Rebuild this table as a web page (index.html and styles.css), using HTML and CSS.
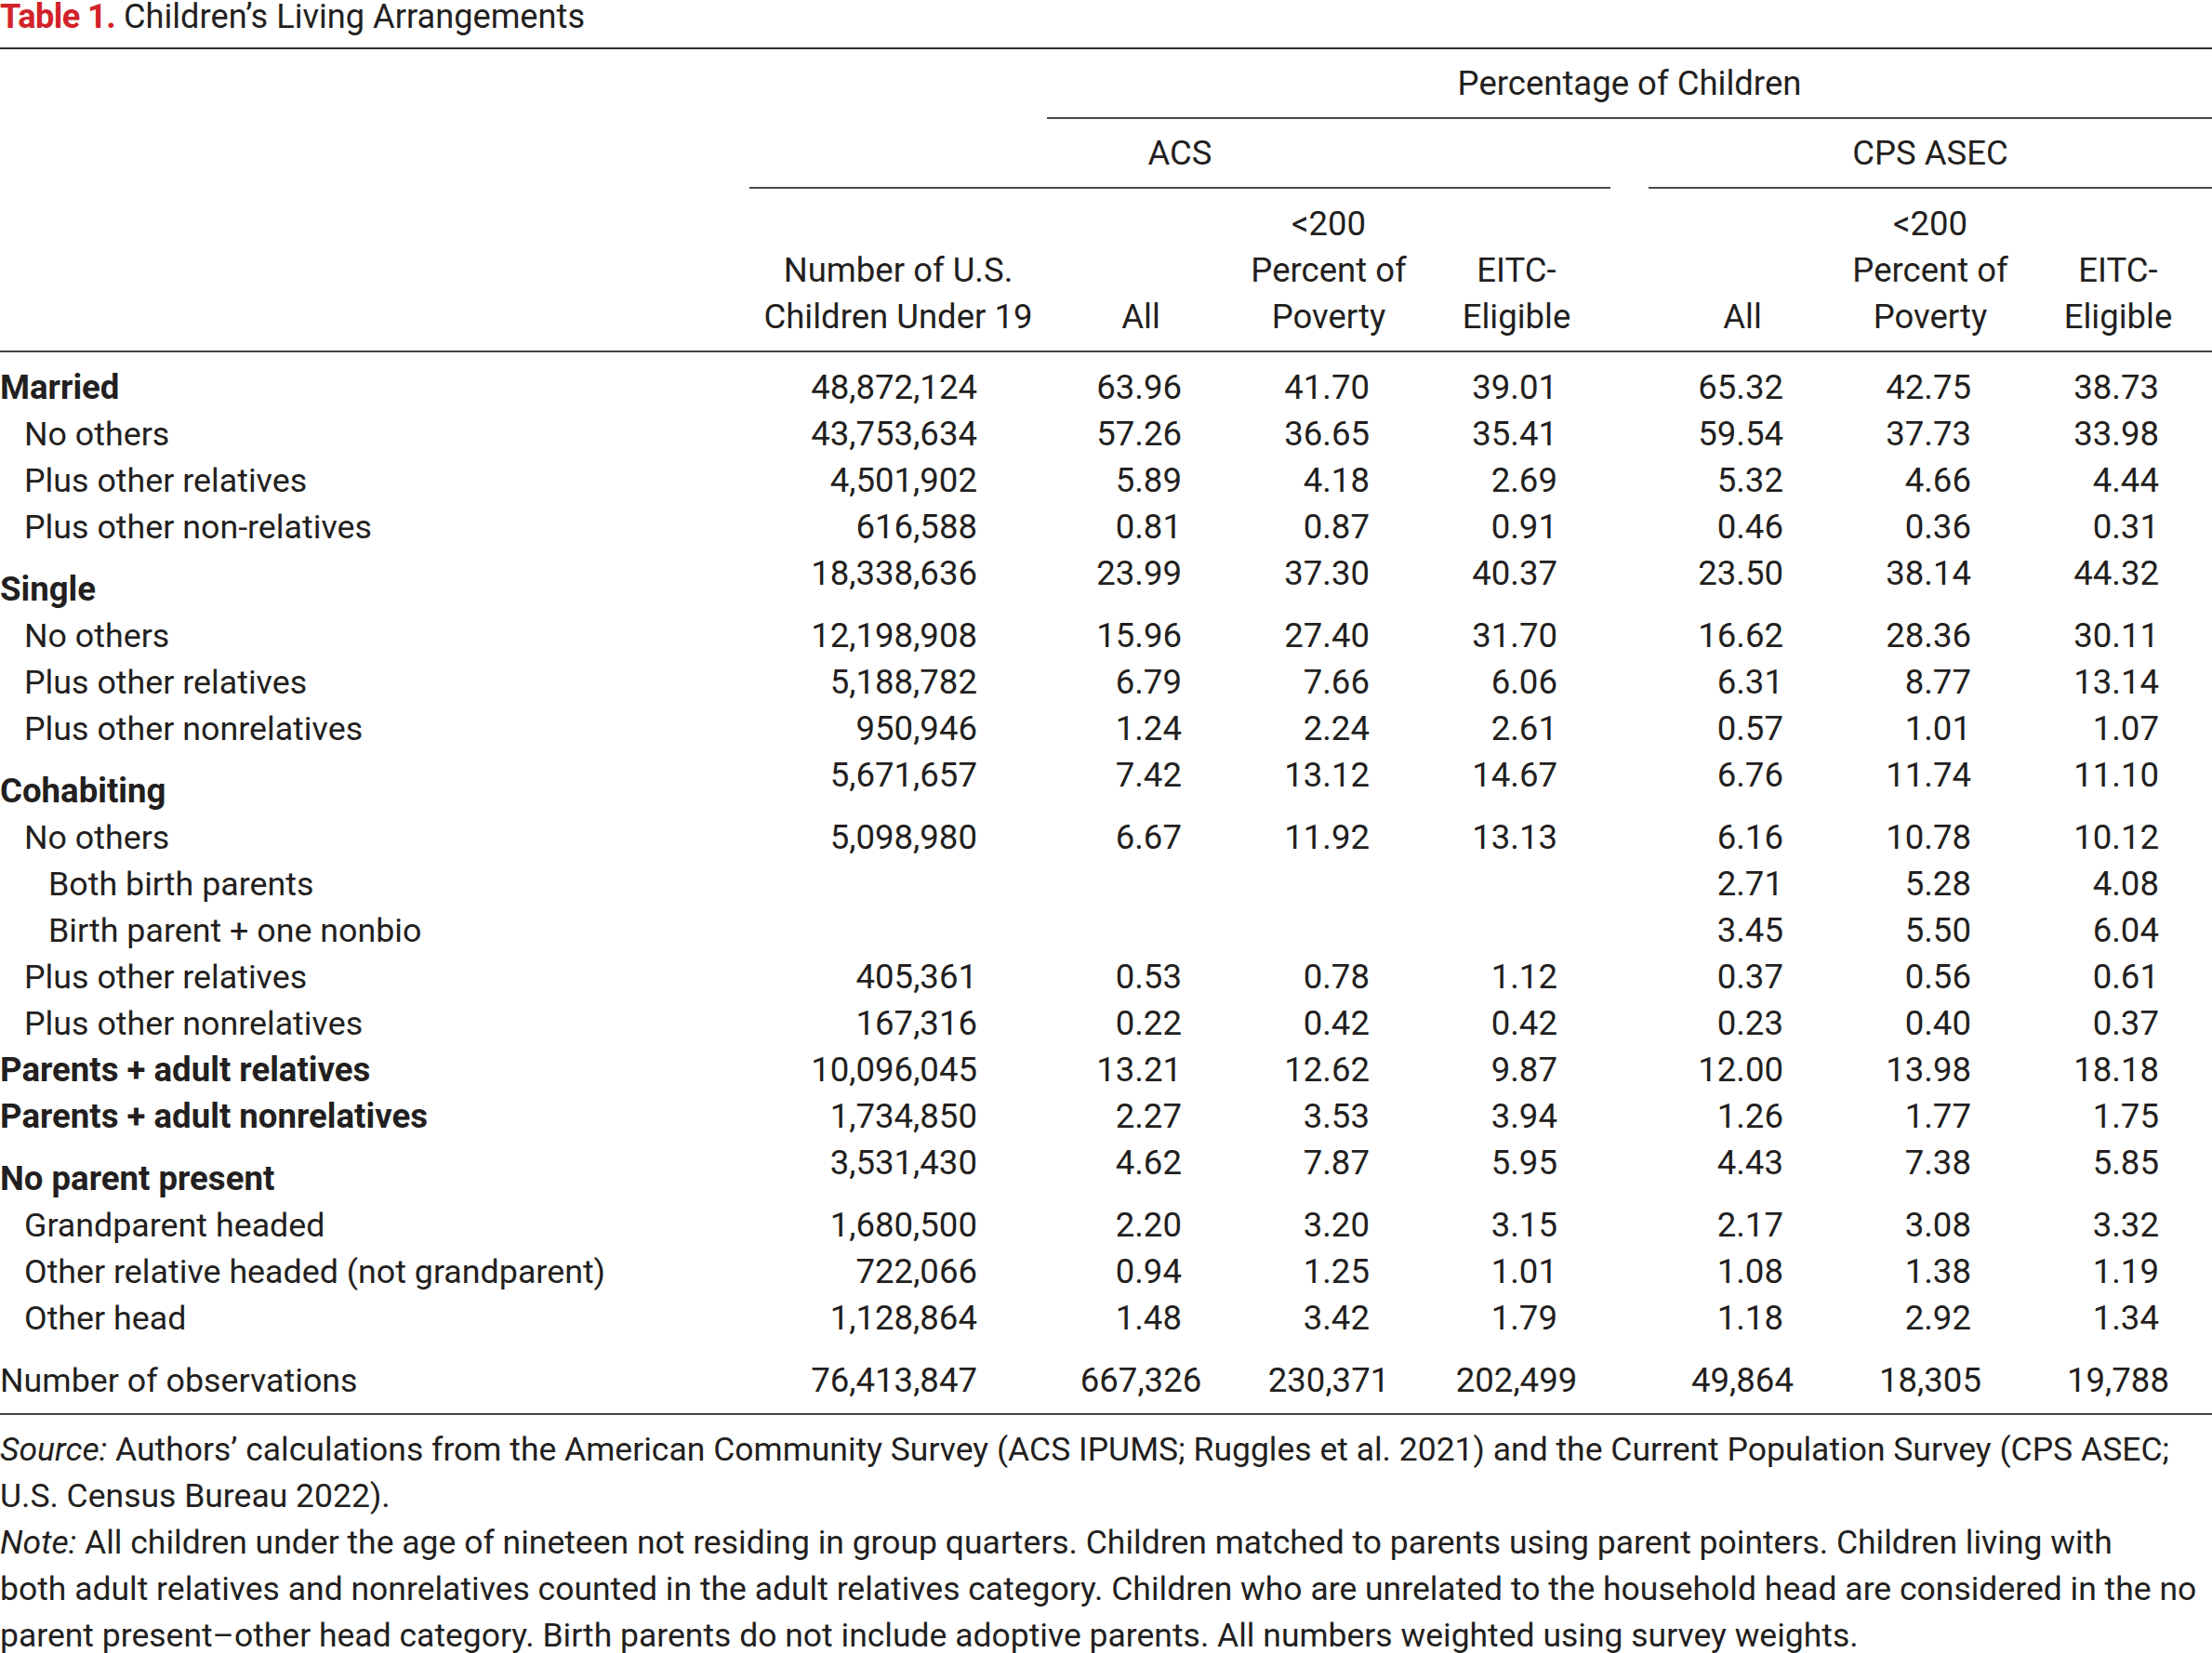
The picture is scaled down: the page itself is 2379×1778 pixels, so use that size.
FILE: index.html
```html
<!DOCTYPE html>
<html lang="en">
<head>
<meta charset="utf-8">
<title>Table 1. Children’s Living Arrangements</title>
<link rel="stylesheet" href="styles.css">
</head>
<body>
<div class="page">
  <h1 class="title"><span class="tlabel">Table 1.</span> Children’s Living Arrangements</h1>
  <table class="tbl">
    <colgroup>
      <col class="c-label"><col class="c-count"><col class="c-pct"><col class="c-pct"><col class="c-pct"><col class="c-gap"><col class="c-pct"><col class="c-pct"><col class="c-pct">
    </colgroup>
    <thead>
      <tr class="hrow">
        <th colspan="2"></th>
        <th colspan="7" class="ruled">Percentage of Children</th>
      </tr>
      <tr class="hrow">
        <th></th>
        <th colspan="4" class="ruled">ACS</th>
        <th></th>
        <th colspan="3" class="ruled">CPS ASEC</th>
      </tr>
      <tr class="hcols">
        <th></th>
        <th>Number of U.S.<br>Children Under 19</th>
        <th>All</th>
        <th>&lt;200<br>Percent of<br>Poverty</th>
        <th>EITC-<br>Eligible</th>
        <th></th>
        <th>All</th>
        <th>&lt;200<br>Percent of<br>Poverty</th>
        <th>EITC-<br>Eligible</th>
      </tr>
    </thead>
    <tbody>
      <tr class="first">
        <td class="lab b">Married</td><td class="cnt">48,872,124</td><td class="pct">63.96</td><td class="pct">41.70</td><td class="pct">39.01</td><td></td><td class="pct">65.32</td><td class="pct">42.75</td><td class="pct">38.73</td>
      </tr>
      <tr>
        <td class="lab i1">No others</td><td class="cnt">43,753,634</td><td class="pct">57.26</td><td class="pct">36.65</td><td class="pct">35.41</td><td></td><td class="pct">59.54</td><td class="pct">37.73</td><td class="pct">33.98</td>
      </tr>
      <tr>
        <td class="lab i1">Plus other relatives</td><td class="cnt">4,501,902</td><td class="pct">5.89</td><td class="pct">4.18</td><td class="pct">2.69</td><td></td><td class="pct">5.32</td><td class="pct">4.66</td><td class="pct">4.44</td>
      </tr>
      <tr>
        <td class="lab i1">Plus other non-relatives</td><td class="cnt">616,588</td><td class="pct">0.81</td><td class="pct">0.87</td><td class="pct">0.91</td><td></td><td class="pct">0.46</td><td class="pct">0.36</td><td class="pct">0.31</td>
      </tr>
      <tr class="sec">
        <td class="lab b">Single</td><td class="cnt">18,338,636</td><td class="pct">23.99</td><td class="pct">37.30</td><td class="pct">40.37</td><td></td><td class="pct">23.50</td><td class="pct">38.14</td><td class="pct">44.32</td>
      </tr>
      <tr>
        <td class="lab i1">No others</td><td class="cnt">12,198,908</td><td class="pct">15.96</td><td class="pct">27.40</td><td class="pct">31.70</td><td></td><td class="pct">16.62</td><td class="pct">28.36</td><td class="pct">30.11</td>
      </tr>
      <tr>
        <td class="lab i1">Plus other relatives</td><td class="cnt">5,188,782</td><td class="pct">6.79</td><td class="pct">7.66</td><td class="pct">6.06</td><td></td><td class="pct">6.31</td><td class="pct">8.77</td><td class="pct">13.14</td>
      </tr>
      <tr>
        <td class="lab i1">Plus other nonrelatives</td><td class="cnt">950,946</td><td class="pct">1.24</td><td class="pct">2.24</td><td class="pct">2.61</td><td></td><td class="pct">0.57</td><td class="pct">1.01</td><td class="pct">1.07</td>
      </tr>
      <tr class="sec">
        <td class="lab b">Cohabiting</td><td class="cnt">5,671,657</td><td class="pct">7.42</td><td class="pct">13.12</td><td class="pct">14.67</td><td></td><td class="pct">6.76</td><td class="pct">11.74</td><td class="pct">11.10</td>
      </tr>
      <tr>
        <td class="lab i1">No others</td><td class="cnt">5,098,980</td><td class="pct">6.67</td><td class="pct">11.92</td><td class="pct">13.13</td><td></td><td class="pct">6.16</td><td class="pct">10.78</td><td class="pct">10.12</td>
      </tr>
      <tr>
        <td class="lab i2">Both birth parents</td><td class="cnt"></td><td class="pct"></td><td class="pct"></td><td class="pct"></td><td></td><td class="pct">2.71</td><td class="pct">5.28</td><td class="pct">4.08</td>
      </tr>
      <tr>
        <td class="lab i2">Birth parent + one nonbio</td><td class="cnt"></td><td class="pct"></td><td class="pct"></td><td class="pct"></td><td></td><td class="pct">3.45</td><td class="pct">5.50</td><td class="pct">6.04</td>
      </tr>
      <tr>
        <td class="lab i1">Plus other relatives</td><td class="cnt">405,361</td><td class="pct">0.53</td><td class="pct">0.78</td><td class="pct">1.12</td><td></td><td class="pct">0.37</td><td class="pct">0.56</td><td class="pct">0.61</td>
      </tr>
      <tr>
        <td class="lab i1">Plus other nonrelatives</td><td class="cnt">167,316</td><td class="pct">0.22</td><td class="pct">0.42</td><td class="pct">0.42</td><td></td><td class="pct">0.23</td><td class="pct">0.40</td><td class="pct">0.37</td>
      </tr>
      <tr>
        <td class="lab b">Parents + adult relatives</td><td class="cnt">10,096,045</td><td class="pct">13.21</td><td class="pct">12.62</td><td class="pct">9.87</td><td></td><td class="pct">12.00</td><td class="pct">13.98</td><td class="pct">18.18</td>
      </tr>
      <tr>
        <td class="lab b">Parents + adult nonrelatives</td><td class="cnt">1,734,850</td><td class="pct">2.27</td><td class="pct">3.53</td><td class="pct">3.94</td><td></td><td class="pct">1.26</td><td class="pct">1.77</td><td class="pct">1.75</td>
      </tr>
      <tr class="sec">
        <td class="lab b">No parent present</td><td class="cnt">3,531,430</td><td class="pct">4.62</td><td class="pct">7.87</td><td class="pct">5.95</td><td></td><td class="pct">4.43</td><td class="pct">7.38</td><td class="pct">5.85</td>
      </tr>
      <tr>
        <td class="lab i1">Grandparent headed</td><td class="cnt">1,680,500</td><td class="pct">2.20</td><td class="pct">3.20</td><td class="pct">3.15</td><td></td><td class="pct">2.17</td><td class="pct">3.08</td><td class="pct">3.32</td>
      </tr>
      <tr>
        <td class="lab i1">Other relative headed (not grandparent)</td><td class="cnt">722,066</td><td class="pct">0.94</td><td class="pct">1.25</td><td class="pct">1.01</td><td></td><td class="pct">1.08</td><td class="pct">1.38</td><td class="pct">1.19</td>
      </tr>
      <tr>
        <td class="lab i1">Other head</td><td class="cnt">1,128,864</td><td class="pct">1.48</td><td class="pct">3.42</td><td class="pct">1.79</td><td></td><td class="pct">1.18</td><td class="pct">2.92</td><td class="pct">1.34</td>
      </tr>
      <tr class="obs">
        <td class="lab">Number of observations</td><td class="cnt">76,413,847</td><td class="ctr">667,326</td><td class="ctr">230,371</td><td class="ctr">202,499</td><td></td><td class="ctr">49,864</td><td class="ctr">18,305</td><td class="ctr">19,788</td>
      </tr>
    </tbody>
  </table>
  <div class="notes">
    <p class="note"><em>Source:</em> Authors’ calculations from the American Community Survey (ACS IPUMS; Ruggles et al. 2021) and the Current Population Survey (CPS ASEC;<br>U.S. Census Bureau 2022).</p>
    <p class="note"><em>Note:</em> All children under the age of nineteen not residing in group quarters. Children matched to parents using parent pointers. Children living with<br>both adult relatives and nonrelatives counted in the adult relatives category. Children who are unrelated to the household head are considered in the no<br>parent present–other head category. Birth parents do not include adoptive parents. All numbers weighted using survey weights.</p>
  </div>
</div>
</body>
</html>
```

FILE: styles.css
```css
html, body {
  margin: 0;
  padding: 0;
  background: #ffffff;
}

body {
  font-family: Roboto, "Liberation Sans", Arial, sans-serif;
  color: #231f20;
  font-size: 36px;
  overflow: hidden;
}

.page {
  width: 2379px;
}

.title {
  margin: 0;
  padding-bottom: 15px;
  font-size: 36.2px;
  line-height: 36px;
  font-weight: 400;
  white-space: nowrap;
}

.tlabel {
  color: #d2232a;
  font-weight: 700;
  letter-spacing: -0.6px;
}

.tbl {
  width: 2379px;
  table-layout: fixed;
  border-collapse: separate;
  border-spacing: 0;
  border-top: 2px solid #2e2e2e;
  border-bottom: 2px solid #444;
}

.c-label { width: 806px; }
.c-count { width: 320px; }
.c-pct { width: 202px; }
.c-gap { width: 41px; }

th, td {
  padding: 0;
  font-weight: 400;
  line-height: 50px;
  white-space: nowrap;
}

th {
  font-size: 36.5px;
  text-align: center;
  vertical-align: bottom;
}

.hrow th {
  padding-top: 12px;
  padding-bottom: 11px;
  vertical-align: middle;
}

.ruled {
  border-bottom: 2px solid #4a4a4a;
}

.hcols th {
  padding-top: 13px;
  padding-bottom: 11px;
  border-bottom: 2px solid #444;
}

td {
  vertical-align: top;
  font-size: 36.6px;
}

.lab {
  text-align: left;
  font-size: 35.8px;
}

.lab.b {
  font-weight: 700;
  font-size: 36.6px;
}

.i1 { padding-left: 26px; }
.i2 { padding-left: 52px; }

.cnt {
  text-align: right;
  padding-right: 75px;
}

.pct {
  text-align: right;
  padding-right: 57px;
}

.ctr {
  text-align: center;
}

.first td {
  padding-top: 13px;
}

.sec .lab {
  padding-top: 17px;
}

.obs td {
  padding-top: 17px;
  padding-bottom: 10px;
}

.notes {
  padding-top: 12px;
}

.note {
  margin: 0;
  font-size: 35.5px;
  line-height: 50px;
  white-space: nowrap;
}

.note em {
  font-style: italic;
}
```
